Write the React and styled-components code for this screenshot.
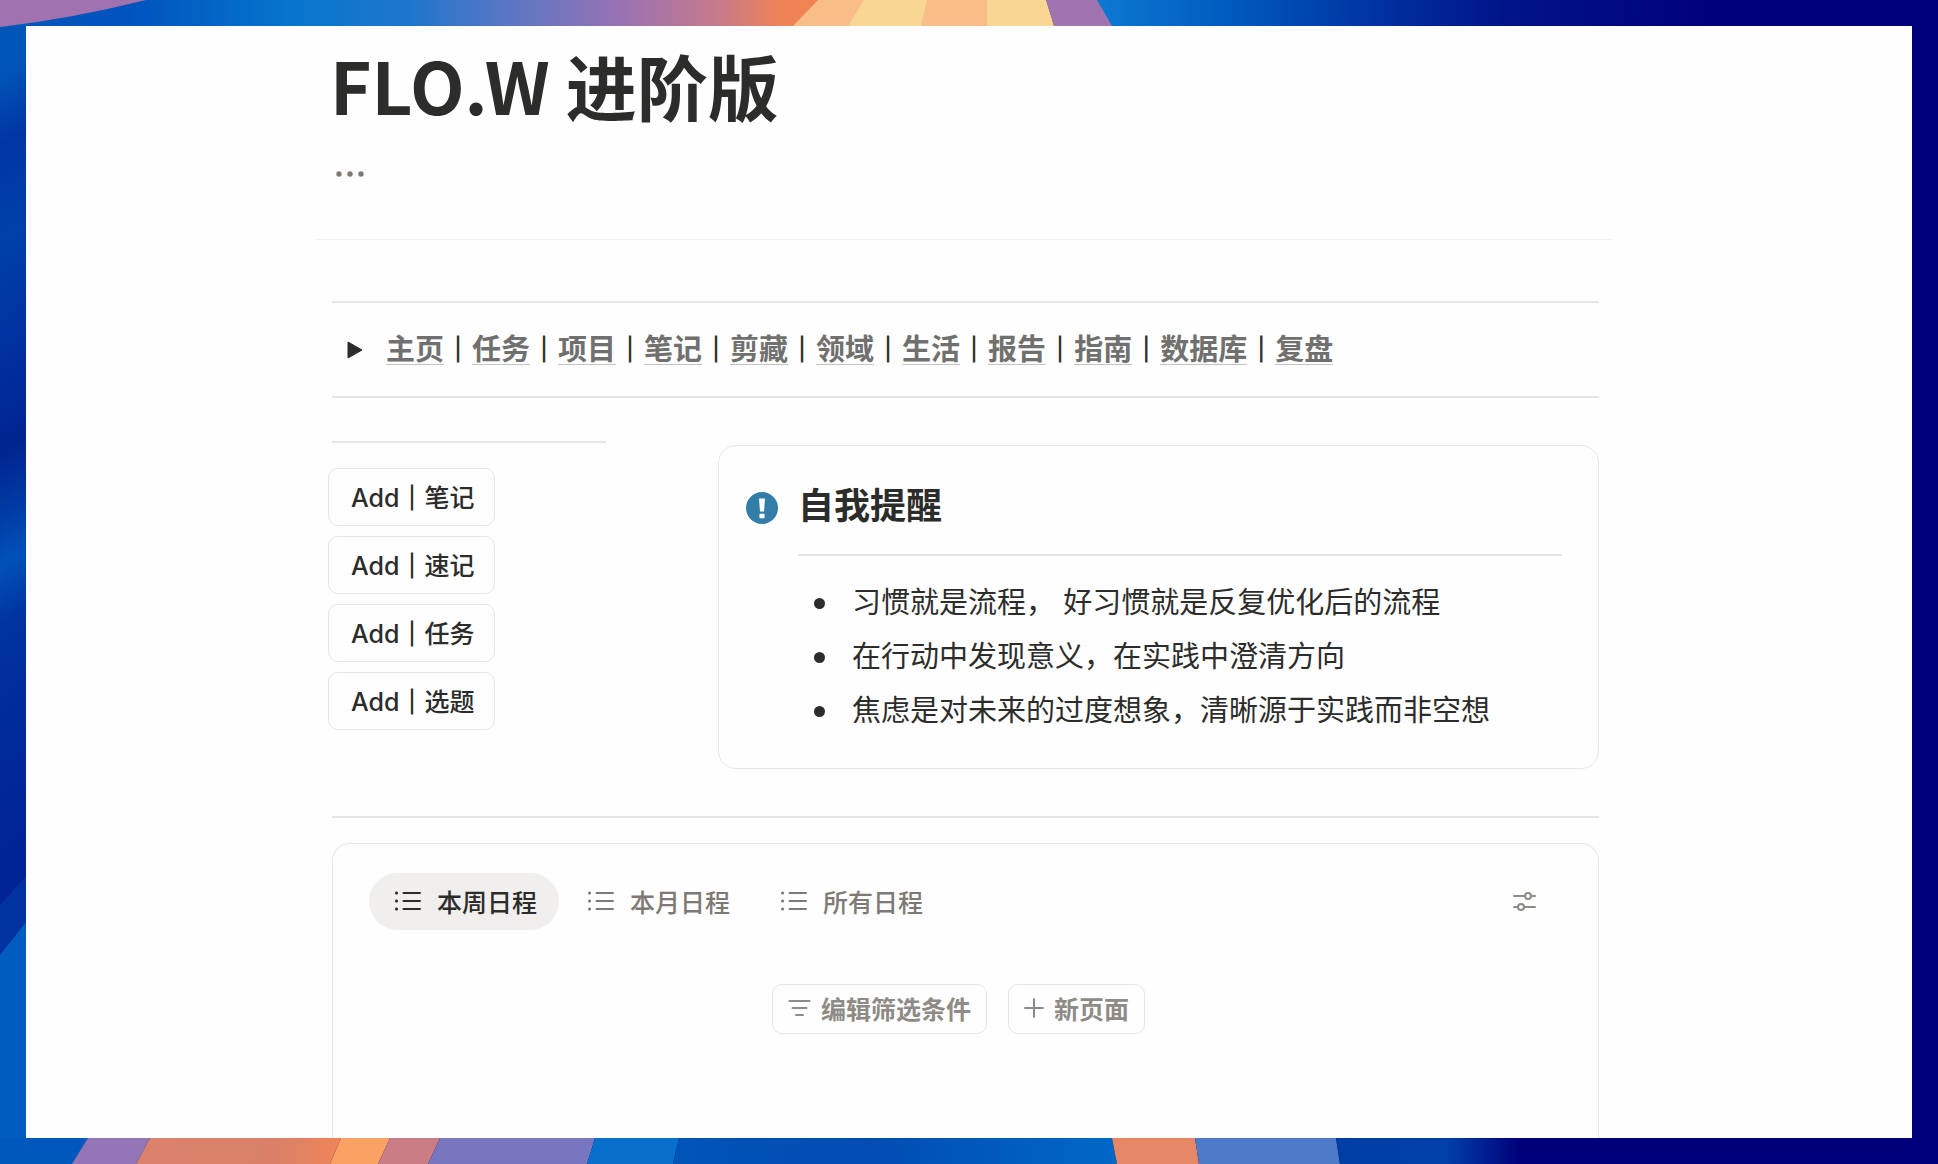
import React, { useState } from "react";
import styled, { createGlobalStyle } from "styled-components";

const GlobalStyle = createGlobalStyle`
  * {
    box-sizing: border-box;
  }
  body {
    margin: 0;
    font-family: Inter, "Noto Sans CJK SC", sans-serif;
    color: #2c2c2b;
  }
  h1, h2, ul {
    margin: 0;
    padding: 0;
  }
  button {
    font-family: inherit;
    cursor: pointer;
  }
`;

const Desktop = styled.div`
  position: relative;
  display: flex;
  min-height: 100vh;
  padding: 26px;
  background: #00007a;
`;

const WallpaperSvg = styled.svg`
  position: absolute;
  top: 0;
  left: 0;
  width: 100%;
  height: 100%;
`;

const Page = styled.main`
  position: relative;
  flex: 1;
  display: flex;
  flex-direction: column;
  padding: 0 300px 0 290px;
  background: #fefefe;
`;

const PageHeader = styled.header`
  padding: 12px 14px 53px;
  border-bottom: 1px solid #f2f2f1;
`;

const Title = styled.h1`
  font-family: "Noto Sans CJK SC", sans-serif;
  font-size: 71px;
  line-height: 92px;
  font-weight: 700;
`;

const MoreButton = styled.button`
  display: flex;
  align-items: center;
  height: 24px;
  margin-top: 32px;
  padding: 0 6px;
  border: none;
  background: none;
  color: #7d7a75;
`;

const Content = styled.div`
  flex: 1;
  display: flex;
  flex-direction: column;
  padding: 61px 13px 0 16px;
`;

const Rule = styled.hr`
  width: 100%;
  height: 2px;
  margin: 0;
  border: none;
  background: #e6e6e5;
`;

const Menu = styled.nav`
  display: flex;
  align-items: center;
  height: 93px;
  padding-left: 15px;
  font-size: 29px;
  line-height: 29px;
  font-weight: 700;
`;

const Toggle = styled.button`
  display: flex;
  margin-right: 23px;
  padding: 0;
  border: none;
  background: none;
  color: #2c2c2b;
`;

const MenuLink = styled.a`
  border-bottom: 1px solid #c4c4c3;
  color: #70706e;
  text-decoration: none;
`;

const Bar = styled.span`
  -webkit-text-stroke: 1px currentColor;
`;

const Separator = styled(Bar)`
  width: 28px;
  display: flex;
  justify-content: center;
  font-size: 26px;
`;

const Columns = styled.div`
  display: grid;
  grid-template-columns: 274px 1fr;
  column-gap: 112px;
  padding: 43px 0 47px;
`;

const AddColumn = styled.div`
  display: flex;
  flex-direction: column;
`;

const AddList = styled.div`
  display: flex;
  flex-direction: column;
  align-items: flex-start;
  gap: 10px;
  margin: 25px 0 0 -4px;
`;

const AddButton = styled.button`
  height: 58px;
  padding: 0 20px 2px 22px;
  border: 1px solid #e6e6e5;
  border-radius: 10px;
  background: #fefefe;
  color: #2c2c2b;
  font-size: 25px;
  font-weight: 500;
`;

const Callout = styled.section`
  display: flex;
  gap: 20px;
  margin-top: 4px;
  padding: 29px 36px 30px 27px;
  border: 1px solid #e6e6e5;
  border-radius: 18px;
`;

const CalloutIcon = styled.svg`
  flex: none;
  width: 32px;
  height: 32px;
  margin-top: 17px;
`;

const CalloutBody = styled.div`
  flex: 1;
`;

const CalloutTitle = styled.h2`
  height: 79px;
  font-size: 36px;
  line-height: 62px;
  font-weight: 700;
`;

const Reminders = styled.ul`
  padding-top: 20px;
  list-style: none;
`;

const Reminder = styled.li`
  display: flex;
  align-items: center;
  gap: 27px;
  padding-left: 16px;
  font-size: 29px;
  line-height: 54px;

  &::before {
    content: "";
    width: 11px;
    height: 11px;
    border-radius: 50%;
    background: #2c2c2b;
  }
`;

const Schedule = styled.section`
  flex: 1;
  margin-top: 25px;
  padding: 29px 36px;
  border: 1px solid #e6e6e5;
  border-bottom: none;
  border-radius: 18px 18px 0 0;
`;

const Toolbar = styled.div`
  display: flex;
  align-items: center;
  justify-content: space-between;
`;

const Tabs = styled.div`
  display: flex;
  gap: 3px;
`;

const Tab = styled.button`
  display: flex;
  align-items: center;
  gap: 16px;
  height: 57px;
  padding: 0 22px 2px 26px;
  border: none;
  border-radius: 29px;
  background: ${(props) => (props.$active ? "#f0efed" : "transparent")};
  color: ${(props) => (props.$active ? "#2c2c2b" : "#7d7a75")};
  font-size: 25px;
  font-weight: 500;
`;

const IconButton = styled.button`
  display: flex;
  margin-right: 26px;
  padding: 0;
  border: none;
  background: none;
  color: #8e8b86;
`;

const EmptyActions = styled.div`
  display: flex;
  justify-content: center;
  gap: 21px;
  margin-top: 54px;
  padding-right: 14px;
`;

const ActionButton = styled.button`
  display: flex;
  align-items: center;
  gap: 10px;
  height: 50px;
  padding: 0 15px 2px;
  border: 1px solid #e6e6e5;
  border-radius: 10px;
  background: #fefefe;
  color: #8e8b86;
  font-size: 25px;
  font-weight: 700;
`;

const links = ["主页", "任务", "项目", "笔记", "剪藏", "领域", "生活", "报告", "指南", "数据库", "复盘"];

const addItems = ["笔记", "速记", "任务", "选题"];

const reminders = [
  "习惯就是流程， 好习惯就是反复优化后的流程",
  "在行动中发现意义，在实践中澄清方向",
  "焦虑是对未来的过度想象，清晰源于实践而非空想",
];

const tabs = ["本周日程", "本月日程", "所有日程"];

function Wallpaper() {
  return (
    <WallpaperSvg viewBox="0 0 1938 1164" preserveAspectRatio="none" aria-hidden="true">
      <defs>
        <linearGradient id="top" gradientUnits="userSpaceOnUse" x1="0" x2="820" y1="0" y2="0">
          <stop offset="0" stopColor="#0058b8" />
          <stop offset="0.15" stopColor="#0052be" />
          <stop offset="0.36" stopColor="#0676cc" />
          <stop offset="0.5" stopColor="#1e76cc" />
          <stop offset="0.62" stopColor="#5a76c4" />
          <stop offset="0.76" stopColor="#9a72b2" />
          <stop offset="0.88" stopColor="#c87a88" />
          <stop offset="0.95" stopColor="#ee8358" />
          <stop offset="1" stopColor="#f08452" />
        </linearGradient>
        <linearGradient id="topRight" gradientUnits="userSpaceOnUse" x1="1100" x2="1720" y1="0" y2="0">
          <stop offset="0" stopColor="#0c78d0" />
          <stop offset="0.2" stopColor="#005cc0" />
          <stop offset="0.45" stopColor="#0032a0" />
          <stop offset="0.65" stopColor="#001488" />
          <stop offset="1" stopColor="#00007a" />
        </linearGradient>
        <linearGradient id="left" gradientUnits="userSpaceOnUse" x1="0" x2="0" y1="0" y2="960" gradientTransform="skewY(-30)">
          <stop offset="0" stopColor="#0058b8" />
          <stop offset="0.08" stopColor="#0054b8" />
          <stop offset="0.15" stopColor="#0036a4" />
          <stop offset="0.25" stopColor="#0040a8" />
          <stop offset="0.36" stopColor="#0032a0" />
          <stop offset="0.47" stopColor="#002490" />
          <stop offset="0.54" stopColor="#003ca4" />
          <stop offset="0.59" stopColor="#0052b8" />
          <stop offset="0.65" stopColor="#0034a0" />
          <stop offset="0.8" stopColor="#002898" />
          <stop offset="1" stopColor="#002090" />
        </linearGradient>
        <linearGradient id="bottomMid" gradientUnits="userSpaceOnUse" x1="670" x2="1115" y1="0" y2="0">
          <stop offset="0" stopColor="#0054b8" />
          <stop offset="0.45" stopColor="#004cb2" />
          <stop offset="1" stopColor="#0068c6" />
        </linearGradient>
        <linearGradient id="orange" gradientUnits="userSpaceOnUse" x1="136" x2="341" y1="0" y2="0">
          <stop offset="0" stopColor="#da826c" />
          <stop offset="0.7" stopColor="#da8068" />
          <stop offset="1" stopColor="#f08656" />
        </linearGradient>
        <linearGradient id="bottomRight" gradientUnits="userSpaceOnUse" x1="1336" x2="1520" y1="0" y2="0">
          <stop offset="0" stopColor="#003ea4" />
          <stop offset="0.6" stopColor="#0040a8" />
          <stop offset="1" stopColor="#00007a" />
        </linearGradient>
      </defs>

      <rect width="26" height="1164" fill="url(#left)" />
      <path d="M0 905L26 876V922L0 955Z" fill="#0032a0" />
      <path d="M0 955L26 922V1164H0Z" fill="#005cbe" />

      <rect width="820" height="27" fill="url(#top)" />
      <path d="M0 0H146Q70 19 0 27Z" fill="#a072ae" />
      <path d="M818 0H1046L1054 26H793Z" fill="#f9be88" />
      <path d="M864 0H927L921 26H848Z" fill="#f8d694" />
      <path d="M987 0H1046L1054 26H987Z" fill="#f8d694" />
      <rect x="1054" width="884" height="26" fill="url(#topRight)" />
      <path d="M1046 0H1097L1112 26H1054Z" fill="#a074ae" />

      <rect y="1138" width="100" height="26" fill="#0058bc" />
      <path d="M88 1138H150L136 1164H72Z" fill="#9476b6" />
      <path d="M150 1138H341L330 1164H136Z" fill="url(#orange)" />
      <path d="M341 1138H390L378 1164H330Z" fill="#faa264" />
      <path d="M390 1138H440L428 1164H378Z" fill="#ca7d84" />
      <path d="M440 1138H595L587 1164H428Z" fill="#7876be" />
      <path d="M595 1138H679L673 1164H587Z" fill="#0870ca" />
      <path d="M679 1138H1112L1117 1164H673Z" fill="url(#bottomMid)" />
      <path d="M1112 1138H1195L1199 1164H1117Z" fill="#e68766" />
      <path d="M1195 1138H1336L1340 1164H1199Z" fill="#4c7ac6" />
      <path d="M1336 1138H1530V1164H1340Z" fill="url(#bottomRight)" />
    </WallpaperSvg>
  );
}

function DotsIcon() {
  return (
    <svg width="28" height="6" viewBox="0 0 28 6" fill="currentColor">
      <circle cx="3" cy="3" r="2.7" />
      <circle cx="14" cy="3" r="2.7" />
      <circle cx="25" cy="3" r="2.7" />
    </svg>
  );
}

function ListIcon() {
  return (
    <svg width="26" height="20" viewBox="0 0 26 20" fill="none" stroke="currentColor" strokeWidth="2" strokeLinecap="round">
      <path d="M8.5 2H25M8.5 10H25M8.5 18H25" />
      <path d="M1.5 2H1.6M1.5 10H1.6M1.5 18H1.6" strokeWidth="3" />
    </svg>
  );
}

function SlidersIcon() {
  return (
    <svg width="24" height="20" viewBox="0 0 24 20" fill="none" stroke="currentColor" strokeWidth="2" strokeLinecap="round">
      <path d="M2 4H12.6M19.4 4H23M2 15H5.6M12.4 15H23" />
      <circle cx="16" cy="4" r="3" />
      <circle cx="9" cy="15" r="3" />
    </svg>
  );
}

function FilterIcon() {
  return (
    <svg width="23" height="18" viewBox="0 0 23 18" fill="none" stroke="currentColor" strokeWidth="2" strokeLinecap="round">
      <path d="M1.5 2H21.5M4.5 9H18.5M8 16H15" />
    </svg>
  );
}

function PlusIcon() {
  return (
    <svg width="20" height="20" viewBox="0 0 20 20" fill="none" stroke="currentColor" strokeWidth="2" strokeLinecap="round">
      <path d="M10 1V19M1 10H19" />
    </svg>
  );
}

export default function App() {
  const [activeTab, setActiveTab] = useState("本周日程");

  return (
    <>
      <GlobalStyle />
      <Desktop>
        <Wallpaper />
        <Page>
          <PageHeader>
            <Title>FLO.W 进阶版</Title>
            <MoreButton aria-label="更多">
              <DotsIcon />
            </MoreButton>
          </PageHeader>

          <Content>
            <Rule />
            <Menu>
              <Toggle aria-label="展开">
                <svg width="16" height="18" viewBox="0 0 16 18">
                  <path d="M1 1L15 9L1 17Z" fill="currentColor" stroke="currentColor" strokeLinejoin="round" />
                </svg>
              </Toggle>
              {links.map((link, index) => (
                <React.Fragment key={link}>
                  {index > 0 && <Separator>｜</Separator>}
                  <MenuLink href="#">{link}</MenuLink>
                </React.Fragment>
              ))}
            </Menu>
            <Rule />

            <Columns>
              <AddColumn>
                <Rule />
                <AddList>
                  {addItems.map((item) => (
                    <AddButton key={item}>
                      Add<Bar>｜</Bar>{item}
                    </AddButton>
                  ))}
                </AddList>
              </AddColumn>

              <Callout>
                <CalloutIcon viewBox="0 0 32 32">
                  <circle cx="16" cy="16" r="16" fill="#337ea9" />
                  <path d="M13 6.5H19L18 19.5H14Z" fill="#fff" />
                  <rect x="13.4" y="21.8" width="5.2" height="4.4" rx="1" fill="#fff" />
                </CalloutIcon>
                <CalloutBody>
                  <CalloutTitle>自我提醒</CalloutTitle>
                  <Rule />
                  <Reminders>
                    {reminders.map((text) => (
                      <Reminder key={text}>{text}</Reminder>
                    ))}
                  </Reminders>
                </CalloutBody>
              </Callout>
            </Columns>

            <Rule />
            <Schedule>
              <Toolbar>
                <Tabs>
                  {tabs.map((tab) => (
                    <Tab key={tab} $active={tab === activeTab} onClick={() => setActiveTab(tab)}>
                      <ListIcon />
                      {tab}
                    </Tab>
                  ))}
                </Tabs>
                <IconButton aria-label="视图设置">
                  <SlidersIcon />
                </IconButton>
              </Toolbar>
              <EmptyActions>
                <ActionButton>
                  <FilterIcon />
                  编辑筛选条件
                </ActionButton>
                <ActionButton>
                  <PlusIcon />
                  新页面
                </ActionButton>
              </EmptyActions>
            </Schedule>
          </Content>
        </Page>
      </Desktop>
    </>
  );
}
